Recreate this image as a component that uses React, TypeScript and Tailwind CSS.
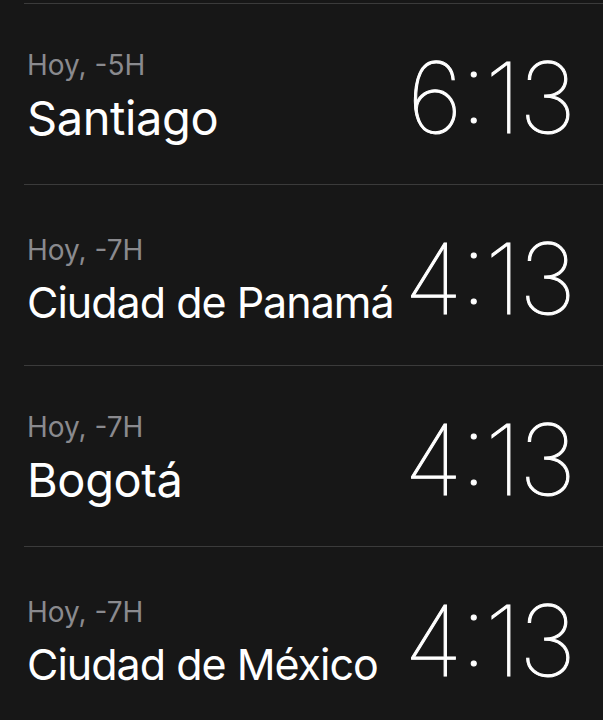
const clocks = [
  { offset: "Hoy, -5H", city: "Santiago", time: "6:13", long: false },
  { offset: "Hoy, -7H", city: "Ciudad de Panamá", time: "4:13", long: true },
  { offset: "Hoy, -7H", city: "Bogotá", time: "4:13", long: false },
  { offset: "Hoy, -7H", city: "Ciudad de México", time: "4:13", long: true },
];

const App = () => {
  return (
    <div className="min-h-screen bg-[#171717] pt-[3px] font-['Inter',sans-serif] overflow-hidden">
      {clocks.map((c, i) => (
        <div
          key={i}
          className="ml-[24px] h-[181px] border-t border-[#3b3b3b] pl-[3px] pr-[29px] flex items-end justify-between pb-[43px]"
        >
          <div className="flex flex-col whitespace-nowrap">
            <p className="text-[28px] leading-none text-[#8a8a8e] mb-[15px]">
              {c.offset}
            </p>
            <p
              className={
                c.long
                  ? "text-[43px] leading-none text-white tracking-[-1px] -mb-[2px] mt-[2px]"
                  : "text-[47px] leading-none text-white tracking-[-0.4px]"
              }
            >
              {c.city}
            </p>
          </div>
          <p className="text-[98px] leading-none font-thin text-white tracking-[-2px] -mb-[6px] [font-feature-settings:'case'] [-webkit-text-stroke:1px_#fff]">
            {c.time}
          </p>
        </div>
      ))}
    </div>
  );
};

export default App;
